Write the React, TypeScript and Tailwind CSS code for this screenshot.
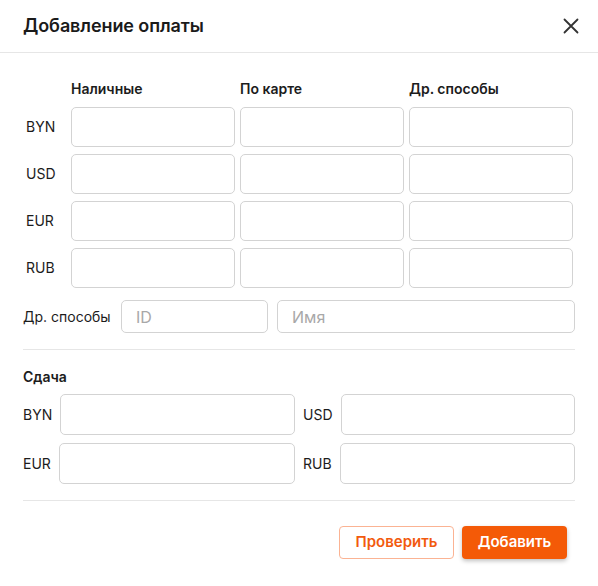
import React from "react";

const inputCls =
  "block w-full h-[40px] rounded-[5px] border border-[#d3d3d3] bg-white px-[14px] text-[16px] text-[#222] placeholder:text-[#a8a8a8] outline-none";

function Cell() {
  return <input className={inputCls} />;
}

export default function App() {
  const rows = ["BYN", "USD", "EUR", "RUB"];
  return (
    <div className="w-[598px] h-[586px] bg-white font-['Inter','Noto_Sans',sans-serif] text-[#1c1c1c]">
      <div className="h-[53px] flex items-center justify-between pl-[23px] pr-[19px] border-b border-[#e6e6e6]">
        <h1 className="text-[18px] font-semibold leading-[24px] tracking-[-0.1px] text-[#1a1a1a]">
          Добавление оплаты
        </h1>
        <button className="w-[16px] h-[16px] flex items-center justify-center" aria-label="close">
          <svg width="16" height="16" viewBox="0 0 16 16" fill="none">
            <path d="M1.5 1.5L14.5 14.5M14.5 1.5L1.5 14.5" stroke="#333" strokeWidth="1.8" strokeLinecap="round" />
          </svg>
        </button>
      </div>

      <div className="px-[23px]">
        <div className="grid grid-cols-[43px_164px_164px_164px] gap-x-[5px] pt-[26px]">
          <div />
          <div className="text-[14px] font-semibold leading-[20px]">Наличные</div>
          <div className="text-[14px] font-semibold leading-[20px]">По карте</div>
          <div className="text-[14px] font-semibold leading-[20px]">Др. способы</div>
        </div>
        <div className="grid grid-cols-[43px_164px_164px_164px] gap-x-[5px] gap-y-[7px] mt-[8px]">
          {rows.map((r) => (
            <React.Fragment key={r}>
              <div className="flex items-center pl-[3px] text-[14px] leading-[20px]">{r}</div>
              <Cell />
              <Cell />
              <Cell />
            </React.Fragment>
          ))}
        </div>

        <div className="flex items-center mt-[12px]">
          <div className="w-[98px] shrink-0 text-[14px] leading-[20px]">Др. способы</div>
          <input
            placeholder="ID"
            className="block w-[147px] h-[33px] rounded-[5px] border border-[#d3d3d3] bg-white px-[14px] text-[16px] placeholder:text-[#a8a8a8] outline-none"
          />
          <input
            placeholder="Имя"
            className="block flex-1 ml-[9px] h-[33px] rounded-[5px] border border-[#d3d3d3] bg-white px-[14px] text-[16px] placeholder:text-[#a8a8a8] outline-none"
          />
        </div>

        <div className="h-px bg-[#e6e6e6] mt-[16px]" />

        <div className="mt-[17px] text-[14px] font-semibold leading-[20px]">Сдача</div>

        <div className="grid grid-cols-2 gap-x-[8px] gap-y-[8px] mt-[7px]">
          {["BYN", "USD", "EUR", "RUB"].map((r) => (
            <div key={r} className="flex items-center gap-[8px]">
              <span className="text-[14px] leading-[20px]">{r}</span>
              <input className="block flex-1 min-w-0 h-[41px] rounded-[5px] border border-[#d3d3d3] bg-white px-[14px] text-[16px] outline-none" />
            </div>
          ))}
        </div>

        <div className="h-px bg-[#e6e6e6] mt-[16px]" />

        <div className="flex justify-end gap-[8px] mt-[25px] pr-[8px]">
          <button className="w-[115px] h-[33px] rounded-[4px] border border-[#fbb393] bg-white text-[15px] font-semibold text-[#f25a0e]">
            Проверить
          </button>
          <button className="w-[105px] h-[33px] rounded-[4px] bg-[#f45a07] text-[15px] font-semibold text-white shadow-[0_2px_4px_rgba(0,0,0,0.25)]">
            Добавить
          </button>
        </div>
      </div>
    </div>
  );
}
